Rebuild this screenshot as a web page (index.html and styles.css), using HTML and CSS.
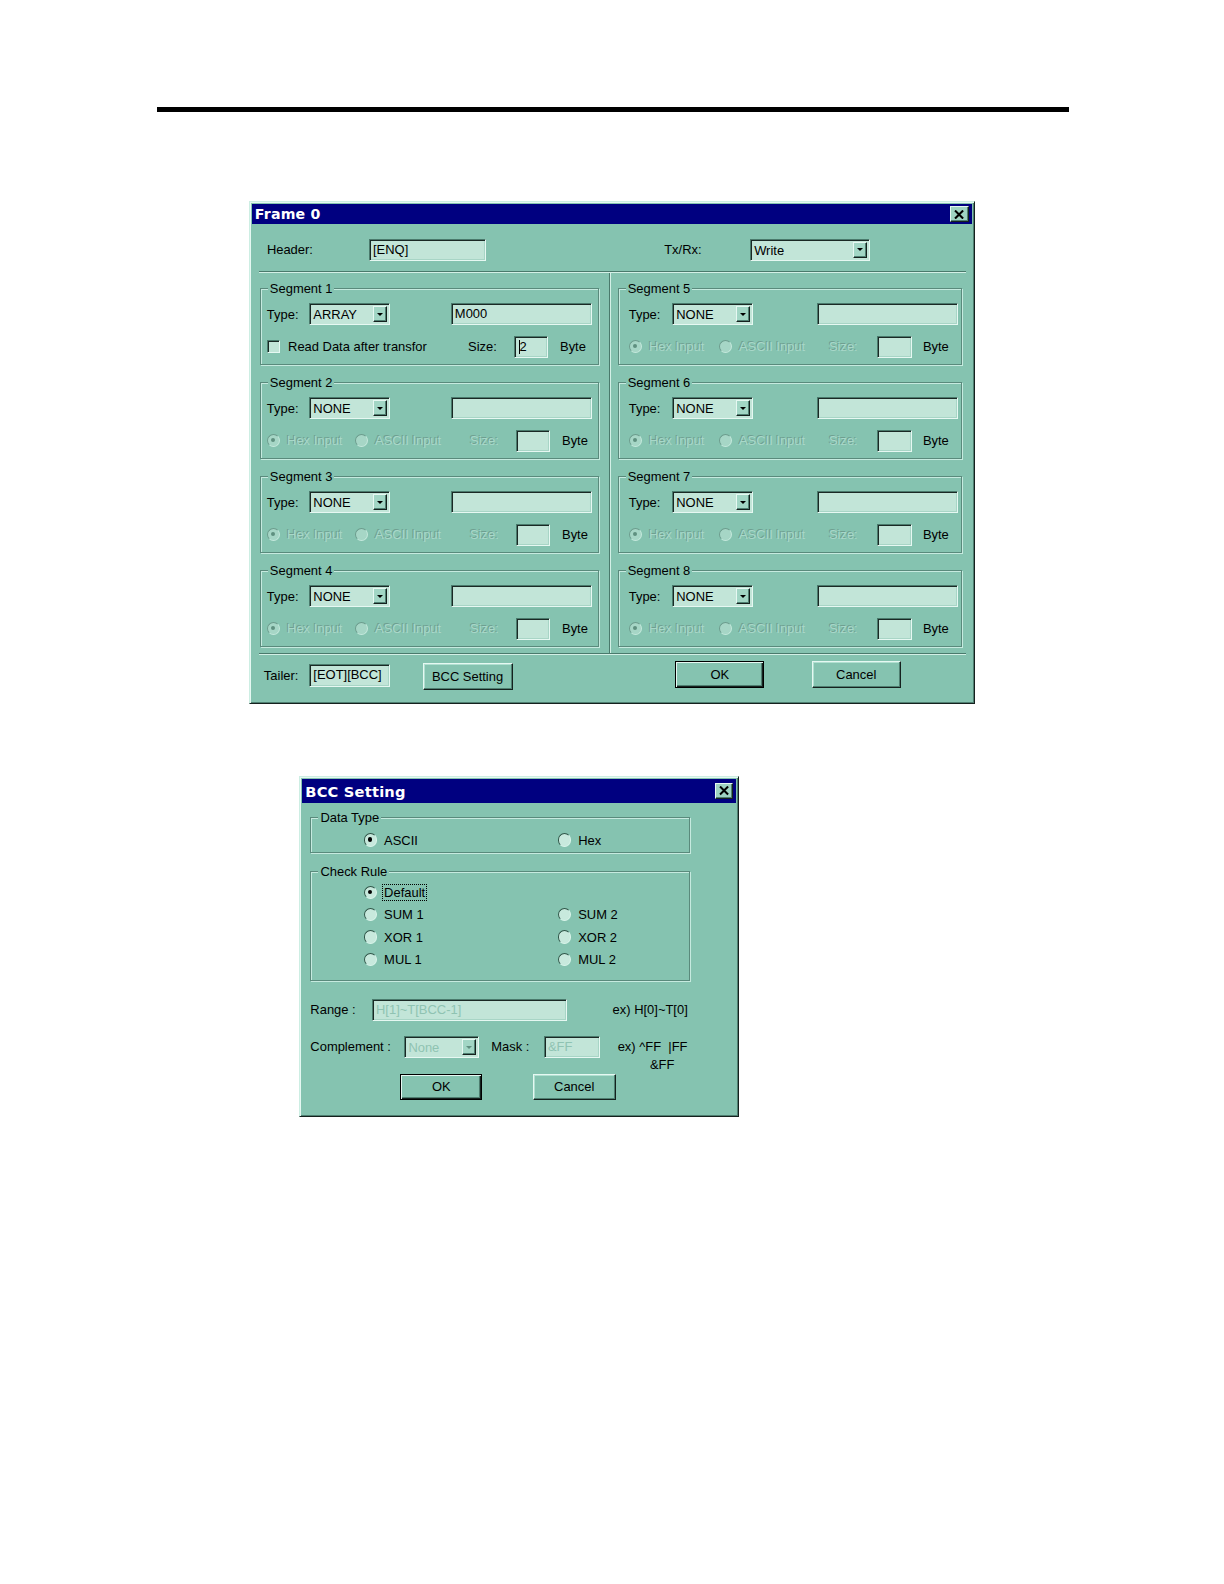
FILE: index.html
```html
<!DOCTYPE html>
<html>
<head>
<meta charset="utf-8">
<title>Frame 0 / BCC Setting</title>
<link rel="stylesheet" href="styles.css">
</head>
<body>
<div class="page">
  <div class="rule"></div>

  <div class="win frame0">
    <div class="titlebar">
      <span class="title">Frame 0</span>
      <span class="closebtn"><svg width="10" height="9" viewBox="0 0 10 9"><path d="M1 0.5 L9 8.5 M9 0.5 L1 8.5" stroke="#000" stroke-width="2"/></svg></span>
    </div>
    <div class="hdr">
      <span class="lbl w-header">Header:</span>
      <div class="field f-header">[ENQ]</div>
      <span class="lbl w-txrx">Tx/Rx:</span>
      <div class="combo c-txrx"><span class="ctext">Write</span><span class="cbtn"><i></i></span></div>
    </div>
    <div class="hsep"></div>
    <div class="cols">
      <div class="col left">
        <div class="group">
          <span class="gtitle">Segment 1</span>
          <div class="grow">
            <span class="lbl w-type">Type:</span>
            <div class="combo c-type"><span class="ctext">ARRAY</span><span class="cbtn"><i></i></span></div>
            <div class="field f-data">M000</div>
          </div>
          <div class="grow row2">
            <span class="opt w-check"><span class="check"></span><span class="lbl">Read Data after transfor</span></span>
            <span class="lbl w-size1">Size:</span>
            <div class="field f-size1"><span class="caret"></span>2</div>
            <span class="lbl byte">Byte</span>
          </div>
        </div>
        <div class="group">
          <span class="gtitle">Segment 2</span>
          <div class="grow">
            <span class="lbl w-type">Type:</span>
            <div class="combo c-type"><span class="ctext">NONE</span><span class="cbtn"><i></i></span></div>
            <div class="field f-data"></div>
          </div>
          <div class="grow row2">
            <span class="opt w-hex"><span class="radio dis on"></span><span class="dis-t">Hex Input</span></span>
            <span class="opt w-ascii"><span class="radio dis"></span><span class="dis-t">ASCII Input</span></span>
            <span class="dis-t w-size">Size:</span>
            <div class="field f-size"></div>
            <span class="lbl byte">Byte</span>
          </div>
        </div>
        <div class="group">
          <span class="gtitle">Segment 3</span>
          <div class="grow">
            <span class="lbl w-type">Type:</span>
            <div class="combo c-type"><span class="ctext">NONE</span><span class="cbtn"><i></i></span></div>
            <div class="field f-data"></div>
          </div>
          <div class="grow row2">
            <span class="opt w-hex"><span class="radio dis on"></span><span class="dis-t">Hex Input</span></span>
            <span class="opt w-ascii"><span class="radio dis"></span><span class="dis-t">ASCII Input</span></span>
            <span class="dis-t w-size">Size:</span>
            <div class="field f-size"></div>
            <span class="lbl byte">Byte</span>
          </div>
        </div>
        <div class="group">
          <span class="gtitle">Segment 4</span>
          <div class="grow">
            <span class="lbl w-type">Type:</span>
            <div class="combo c-type"><span class="ctext">NONE</span><span class="cbtn"><i></i></span></div>
            <div class="field f-data"></div>
          </div>
          <div class="grow row2">
            <span class="opt w-hex"><span class="radio dis on"></span><span class="dis-t">Hex Input</span></span>
            <span class="opt w-ascii"><span class="radio dis"></span><span class="dis-t">ASCII Input</span></span>
            <span class="dis-t w-size">Size:</span>
            <div class="field f-size"></div>
            <span class="lbl byte">Byte</span>
          </div>
        </div>
      </div>
      <div class="vsep"></div>
      <div class="col right">
        <div class="group">
          <span class="gtitle">Segment 5</span>
          <div class="grow">
            <span class="lbl w-type">Type:</span>
            <div class="combo c-type"><span class="ctext">NONE</span><span class="cbtn"><i></i></span></div>
            <div class="field f-data"></div>
          </div>
          <div class="grow row2">
            <span class="opt w-hex"><span class="radio dis on"></span><span class="dis-t">Hex Input</span></span>
            <span class="opt w-ascii"><span class="radio dis"></span><span class="dis-t">ASCII Input</span></span>
            <span class="dis-t w-size">Size:</span>
            <div class="field f-size"></div>
            <span class="lbl byte">Byte</span>
          </div>
        </div>
        <div class="group">
          <span class="gtitle">Segment 6</span>
          <div class="grow">
            <span class="lbl w-type">Type:</span>
            <div class="combo c-type"><span class="ctext">NONE</span><span class="cbtn"><i></i></span></div>
            <div class="field f-data"></div>
          </div>
          <div class="grow row2">
            <span class="opt w-hex"><span class="radio dis on"></span><span class="dis-t">Hex Input</span></span>
            <span class="opt w-ascii"><span class="radio dis"></span><span class="dis-t">ASCII Input</span></span>
            <span class="dis-t w-size">Size:</span>
            <div class="field f-size"></div>
            <span class="lbl byte">Byte</span>
          </div>
        </div>
        <div class="group">
          <span class="gtitle">Segment 7</span>
          <div class="grow">
            <span class="lbl w-type">Type:</span>
            <div class="combo c-type"><span class="ctext">NONE</span><span class="cbtn"><i></i></span></div>
            <div class="field f-data"></div>
          </div>
          <div class="grow row2">
            <span class="opt w-hex"><span class="radio dis on"></span><span class="dis-t">Hex Input</span></span>
            <span class="opt w-ascii"><span class="radio dis"></span><span class="dis-t">ASCII Input</span></span>
            <span class="dis-t w-size">Size:</span>
            <div class="field f-size"></div>
            <span class="lbl byte">Byte</span>
          </div>
        </div>
        <div class="group">
          <span class="gtitle">Segment 8</span>
          <div class="grow">
            <span class="lbl w-type">Type:</span>
            <div class="combo c-type"><span class="ctext">NONE</span><span class="cbtn"><i></i></span></div>
            <div class="field f-data"></div>
          </div>
          <div class="grow row2">
            <span class="opt w-hex"><span class="radio dis on"></span><span class="dis-t">Hex Input</span></span>
            <span class="opt w-ascii"><span class="radio dis"></span><span class="dis-t">ASCII Input</span></span>
            <span class="dis-t w-size">Size:</span>
            <div class="field f-size"></div>
            <span class="lbl byte">Byte</span>
          </div>
        </div>
      </div>
    </div>
    <div class="hsep"></div>
    <div class="footer">
      <span class="lbl w-tailer">Tailer:</span>
      <div class="field f-tailer">[EOT][BCC]</div>
      <span class="btn b-bcc">BCC Setting</span>
      <span class="btn default b-ok">OK</span>
      <span class="btn b-cancel">Cancel</span>
    </div>
  </div>

  <div class="win bcc">
    <div class="titlebar tb-bcc">
      <span class="title">BCC Setting</span>
      <span class="closebtn"><svg width="10" height="9" viewBox="0 0 10 9"><path d="M1 0.5 L9 8.5 M9 0.5 L1 8.5" stroke="#000" stroke-width="2"/></svg></span>
    </div>
    <div class="group g-dtype">
      <span class="gtitle">Data Type</span>
      <div class="brow">
        <span class="opt w-bcol"><span class="radio on"></span><span class="lbl">ASCII</span></span>
        <span class="opt"><span class="radio"></span><span class="lbl">Hex</span></span>
      </div>
    </div>
    <div class="group g-rule">
      <span class="gtitle">Check Rule</span>
      <div class="brow">
        <span class="opt w-bcol"><span class="radio on"></span><span class="lbl focus">Default</span></span>
      </div>
      <div class="brow">
        <span class="opt w-bcol"><span class="radio"></span><span class="lbl">SUM 1</span></span>
        <span class="opt"><span class="radio"></span><span class="lbl">SUM 2</span></span>
      </div>
      <div class="brow">
        <span class="opt w-bcol"><span class="radio"></span><span class="lbl">XOR 1</span></span>
        <span class="opt"><span class="radio"></span><span class="lbl">XOR 2</span></span>
      </div>
      <div class="brow">
        <span class="opt w-bcol"><span class="radio"></span><span class="lbl">MUL 1</span></span>
        <span class="opt"><span class="radio"></span><span class="lbl">MUL 2</span></span>
      </div>
    </div>
    <div class="frow r-range">
      <span class="lbl w-range">Range :</span>
      <div class="field f-range dis-t">H[1]~T[BCC-1]</div>
      <span class="lbl ex-range">ex) H[0]~T[0]</span>
    </div>
    <div class="frow r-comp">
      <span class="lbl w-comp">Complement :</span>
      <div class="combo c-comp"><span class="ctext dis-t">None</span><span class="cbtn dis"><i></i></span></div>
      <span class="lbl w-mask">Mask :</span>
      <div class="field f-mask dis-t">&amp;FF</div>
      <div class="ex-mask"><div>ex) ^FF&nbsp;&nbsp;|FF</div><div class="ex2">&amp;FF</div></div>
    </div>
    <div class="frow r-btns">
      <span class="btn default b-bok">OK</span>
      <span class="btn b-bcancel">Cancel</span>
    </div>
  </div>
</div>
</body>
</html>
```

FILE: styles.css
```css
* { box-sizing: border-box; }

html, body {
  margin: 0;
  background: #ffffff;
}

body {
  font-family: "Liberation Sans", Arial, sans-serif;
  font-size: 12.8px;
  color: #000;
}

.page {
  zoom: 1.011;
  padding-top: 106px;
  padding-bottom: 20px;
}

.rule {
  margin-left: 155px;
  width: 902px;
  height: 5px;
  background: #000;
}

/* ---------- window chrome ---------- */
.win {
  background: #85c3b0;
  border: 1px solid;
  border-color: #cdeee3 #15211e #15211e #cdeee3;
  box-shadow: inset 1px 1px 0 #e6f8f2, inset -1px -1px 0 #4f7f71;
  padding: 2px;
}

.titlebar {
  height: 20px;
  background: #000080;
  color: #fff;
  display: flex;
  align-items: center;
  justify-content: space-between;
  padding: 0 3px 0 3px;
}

.title {
  font-family: "DejaVu Sans", sans-serif;
  font-weight: bold;
  font-size: 14px;
  letter-spacing: 0.2px;
}

.closebtn {
  width: 18px;
  height: 16px;
  background: #9fd3c2;
  border: 1px solid;
  border-color: #e6f8f2 #15211e #15211e #e6f8f2;
  box-shadow: inset -1px -1px 0 #4f7f71;
  display: flex;
  align-items: center;
  justify-content: center;
}

.lbl { white-space: nowrap; }

.dis-t {
  color: #a9d8c9;
  text-shadow: -1px -1px 0 #6f9f90;
  white-space: nowrap;
}

/* ---------- fields ---------- */
.field {
  background: #c2e5d8;
  border: 1px solid;
  border-color: #4a7a6c #e6f8f2 #e6f8f2 #4a7a6c;
  box-shadow: inset 1px 1px 0 #1a2925, inset -1px -1px 0 #a8d5c6;
  padding: 0 3px;
  display: flex;
  align-items: center;
  white-space: nowrap;
  line-height: 14px;
}

.field.dis-t, .ctext.dis-t { text-shadow: none; color: #8fc3b2; }

.combo {
  background: #c2e5d8;
  border: 1px solid;
  border-color: #4a7a6c #e6f8f2 #e6f8f2 #4a7a6c;
  box-shadow: inset 1px 1px 0 #1a2925;
  display: flex;
  align-items: stretch;
  padding: 2px 2px 2px 3px;
}

.ctext {
  flex: 1;
  display: flex;
  align-items: center;
  padding-top: 1px;
}

.cbtn {
  width: 14px;
  background: #a2d6c5;
  border: 1px solid;
  border-color: #e6f8f2 #15211e #15211e #e6f8f2;
  box-shadow: inset -1px -1px 0 #4f7f71;
  display: flex;
  align-items: center;
  justify-content: center;
}

.cbtn i {
  width: 0;
  height: 0;
  border-left: 3px solid transparent;
  border-right: 3px solid transparent;
  border-top: 3px solid #000;
}

.cbtn.dis i { border-top-color: #5f8f80; }

/* ---------- buttons ---------- */
.btn {
  display: flex;
  align-items: center;
  justify-content: center;
  background: #85c3b0;
  border: 1px solid;
  border-color: #e6f8f2 #15211e #15211e #e6f8f2;
  box-shadow: inset -1px -1px 0 #4f7f71, inset 1px 1px 0 #b1e0d1;
  white-space: nowrap;
}

.btn.default {
  border: 1px solid #000;
  box-shadow: inset 1px 1px 0 #e6f8f2, inset -1px -1px 0 #15211e, inset -2px -2px 0 #4f7f71;
}

/* ---------- radio / check ---------- */
.opt {
  display: flex;
  align-items: center;
}

.radio {
  position: relative;
  flex: none;
  width: 13px;
  height: 13px;
  border-radius: 50%;
  background: #c8e9dd;
  border: 1.5px solid;
  border-color: #2f5548 #d9f4ea #d9f4ea #2f5548;
  margin-right: 7px;
}

.radio.on::after {
  content: "";
  position: absolute;
  left: 3px;
  top: 3px;
  width: 4px;
  height: 4px;
  border-radius: 50%;
  background: #000;
}

.radio.dis {
  background: #a6d6c6;
  border-color: #6c9c8d #c4e8dc #c4e8dc #6c9c8d;
}

.radio.dis.on::after { background: #5f9080; }

.check {
  flex: none;
  width: 13px;
  height: 13px;
  background: #c2e5d8;
  border: 1px solid;
  border-color: #4a7a6c #e6f8f2 #e6f8f2 #4a7a6c;
  box-shadow: inset 1px 1px 0 #1a2925;
  margin-right: 8px;
}

/* ---------- separators & groups ---------- */
.hsep {
  margin-left: 7px;
  width: 700px;
  border-top: 1px solid #4a7a6c;
  border-bottom: 1px solid #d3f0e6;
}

.vsep {
  width: 2px;
  border-left: 1px solid #4a7a6c;
  border-right: 1px solid #d3f0e6;
}

.group {
  position: relative;
  border: 1px solid #5a8a7c;
  box-shadow: inset 1px 1px 0 #c6eadf, 1px 1px 0 #c6eadf;
}

.gtitle {
  position: absolute;
  top: -8px;
  left: 7px;
  padding: 0 2px;
  background: #85c3b0;
  line-height: 15px;
  white-space: nowrap;
}

/* ---------- Frame 0 ---------- */
.frame0 {
  margin-top: 88px;
  margin-left: 246px;
  width: 718px;
  height: 497px;
}

.hdr {
  margin-top: 14px;
  height: 22px;
  display: flex;
  align-items: center;
  padding-left: 15px;
}

.w-header { width: 101px; }
.f-header { width: 116px; height: 22px; }
.w-txrx { width: 85px; margin-left: 176px; }
.c-txrx { width: 119px; height: 22px; }

.hdr + .hsep { margin-top: 10px; }

.cols {
  display: flex;
  margin-left: 7px;
  height: 376px;
}

.col {
  padding-top: 15px;
  display: flex;
  flex-direction: column;
  gap: 17px;
}

.col.left { width: 346px; padding-left: 1px; }
.col.left .group { width: 336px; }
.col.right { width: 352px; padding-left: 7px; }
.col.right .group { width: 341px; }

.cols .group {
  height: 76px;
  padding: 14px 0 0 6px;
}

.col.right .group { padding-left: 10px; }

.grow {
  display: flex;
  align-items: center;
  height: 22px;
}

.grow.row2 { margin-top: 10px; }

.w-type { width: 42px; }
.col.right .w-type { width: 43px; }
.c-type { width: 80px; height: 22px; }
.f-data { width: 140px; height: 22px; margin-left: 60px; }
.col.right .f-data { margin-left: 63px; }

.w-check { width: 199px; }
.w-size1 { width: 45px; }
.f-size1 { width: 34px; height: 22px; padding-left: 4px; }
.caret {
  display: inline-block;
  width: 1px;
  height: 14px;
  background: #000;
}

.w-hex { width: 87px; }
.w-ascii { width: 114px; }
.w-size { width: 45px; }
.f-size { width: 34px; height: 22px; }
.byte { margin-left: 12px; }

.col.right .w-hex { width: 89px; }
.col.right .w-ascii { width: 109px; }
.col.right .w-size { width: 48px; }
.col.right .byte { margin-left: 11px; }

.footer {
  margin-top: 2px;
  height: 36px;
  display: flex;
  align-items: center;
  padding-left: 12px;
}

.w-tailer { width: 45px; }
.f-tailer { width: 80px; height: 23px; }
.b-bcc { width: 89px; height: 27px; margin-left: 32px; margin-top: 3px; }
.b-ok { width: 88px; height: 27px; margin-left: 161px; margin-top: -1px; }
.b-cancel { width: 88px; height: 27px; margin-left: 47px; margin-top: -1px; }

/* ---------- BCC Setting ---------- */
.bcc {
  margin-top: 72px;
  margin-left: 296px;
  width: 435px;
  height: 337px;
}

.tb-bcc { height: 23px; }
.tb-bcc .title { font-size: 14.5px; }

.g-dtype {
  margin-top: 14px;
  margin-left: 8px;
  width: 376px;
  height: 36px;
  padding: 14px 0 0 52px;
}

.g-rule {
  margin-top: 18px;
  margin-left: 8px;
  width: 376px;
  height: 108px;
  padding: 9px 0 0 52px;
}

.brow {
  display: flex;
  align-items: center;
  height: 22px;
}

.g-dtype .brow { height: 16px; }

.w-bcol { width: 192px; }

.focus {
  outline: 1px dotted #000;
  outline-offset: 0;
  padding: 0 1px;
  margin-left: -1px;
}

.frow {
  display: flex;
  align-items: center;
  margin-left: 8px;
}

.r-range { margin-top: 18px; height: 22px; }
.w-range { width: 61px; }
.f-range { width: 193px; height: 22px; }
.ex-range { margin-left: 45px; }

.r-comp { margin-top: 15px; height: 22px; align-items: flex-start; }
.r-comp > .lbl { line-height: 22px; }
.w-comp { width: 93px; }
.c-comp { width: 74px; height: 22px; }
.w-mask { width: 52px; margin-left: 12px; }
.f-mask { width: 56px; height: 22px; }
.ex-mask {
  margin-left: 17px;
  height: 22px;
  padding-top: 2px;
  line-height: 18px;
  white-space: nowrap;
}
.ex2 { padding-left: 32px; }

.r-btns { margin-top: 15px; margin-left: 97px; }
.b-bok { width: 81px; height: 26px; }
.b-bcancel { width: 82px; height: 26px; margin-left: 50px; }
```
